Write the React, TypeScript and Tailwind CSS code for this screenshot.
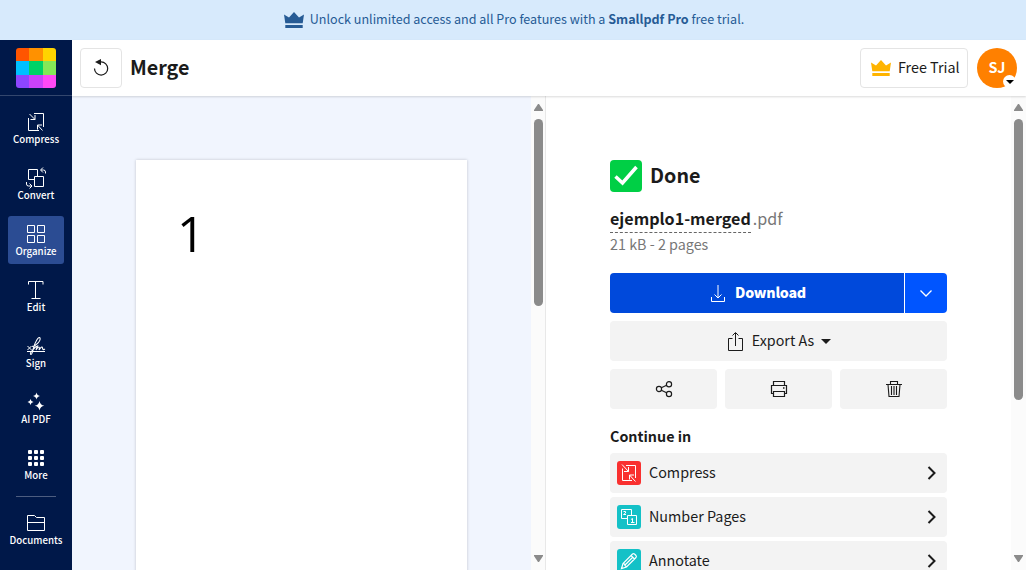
import React from "react";

type IconProps = { className?: string };

function CrownIcon({ className }: IconProps) {
  return (
    <svg className={className} width="20" height="16" viewBox="0 0 20 16" fill="currentColor">
      <path d="M0 2.5 5 5.5 10 0l5 5.500 5-3-1.300 8.800H1.300zM1.300 13h17.400v3H1.300z" />
    </svg>
  );
}

function CompressIcon() {
  return (
    <svg width="24" height="24" viewBox="0 0 24 24" fill="none" stroke="currentColor">
      <path d="M10 3.500h9.500v13.500M4.500 8v12.500h10.500M5.500 4l5.500 5.500M11 5v4.500H6.500M18.500 20.500 13.500 15M13.500 19.500V15H18" />
    </svg>
  );
}

function CompressTileIcon() {
  return (
    <svg width="24" height="24" viewBox="0 0 24 24" fill="none" stroke="currentColor">
      <path d="M9 4.500h9.500v12.500M5.500 7.500v12h9.500M5 3.500l6.500 7M11.500 6v4.500H7M18.500 20.500 12.500 14M12.500 18.500V14H17" />
    </svg>
  );
}

function ConvertIcon() {
  return (
    <svg width="24" height="24" viewBox="0 0 24 24" fill="none" stroke="currentColor">
      <path d="M10 13.500H4.500v-10h9v6.500M10.500 10.500h9v10h-9zM21.500 7.500V6q0-2-2-2H17M19 1.500 16.500 4 19 6.500M2.500 16v2q0 2 2 2H7.500M5.500 17.500 8 20l-2.500 2.500" />
    </svg>
  );
}

function OrganizeIcon() {
  return (
    <svg width="24" height="24" viewBox="0 0 24 24" fill="none" stroke="currentColor">
      <path d="M3.500 3.500h7v7h-7zM13.500 3.500h7v7h-7zM3.500 13.500h7v7h-7zM13.500 13.500h7v7h-7z" />
    </svg>
  );
}

function EditIcon() {
  return (
    <svg width="24" height="24" viewBox="0 0 24 24" fill="none" stroke="currentColor">
      <path d="M4.500 6.500v-3h14.500v3M11.500 3.500v17M7.500 20.500h9" />
    </svg>
  );
}

function SignIcon() {
  return (
    <svg width="24" height="24" viewBox="0 0 24 24" fill="none" stroke="currentColor">
      <path d="M3 17.500h18M3.500 12l4 4M7.500 12l-4 4" />
      <path d="M8 12.500c4 0 9-6 8-8.500s-5 4-6.500 10-2 7-3 6 2-4 5-7l2-1-1.500 4c3-5 4-3 3 0 2-3 3-4 3.500-2s1 2 2.500 1" strokeWidth="1.100" />
    </svg>
  );
}

function SparkIcon() {
  return (
    <svg width="24" height="24" viewBox="0 0 24 24" fill="currentColor">
      <path d="M12.500 2.500q.5 3 3.500 3.500-3 .5-3.500 3.500-.5-3-3.500-3.500 3-.5 3.500-3.500zM6.500 9q.4 2.500 3 3-2.600.5-3 3-.4-2.500-3-3 2.600-.5 3-3zM15.500 11q.7 4 4.800 4.800-4.100.8-4.800 4.800-.7-4-4.800-4.800 4.100-.8 4.800-4.800z" />
    </svg>
  );
}

function MoreIcon() {
  return (
    <svg width="24" height="24" viewBox="0 0 24 24" fill="currentColor">
      {[4, 10, 16].map((y) =>
        [4, 10, 16].map((x) => <rect key={`${x}-${y}`} x={x} y={y} width="4" height="4" rx="1" />)
      )}
    </svg>
  );
}

function FolderIcon() {
  return (
    <svg width="24" height="24" viewBox="0 0 24 24" fill="none" stroke="currentColor">
      <path d="M3.500 19.500v-15h7l2 2h8v13zM3.500 11.500h17" />
    </svg>
  );
}

function ShareIcon() {
  return (
    <svg width="24" height="24" viewBox="0 0 24 24" fill="none" stroke="currentColor" strokeWidth="1.200">
      <circle cx="7" cy="12" r="2.600" />
      <circle cx="17" cy="7.200" r="2.600" />
      <circle cx="17" cy="17" r="2.600" />
      <path d="m9.300 10.800 5.300-2.500M9.300 13.200l5.300 2.600" />
    </svg>
  );
}

function PrintIcon() {
  return (
    <svg width="24" height="24" viewBox="0 0 24 24" fill="none" stroke="currentColor" strokeWidth="1.200">
      <path d="M6.500 8.500v-4h11v4M6.500 16.500h-2v-8h15v8h-2M6.500 14.500h11v5h-11z" />
      <path d="M16 11h1.500" strokeWidth="1.500" />
    </svg>
  );
}

function TrashIcon() {
  return (
    <svg width="24" height="24" viewBox="0 0 24 24" fill="none" stroke="currentColor" strokeWidth="1.100">
      <path d="M4 7.500h16M8.500 7V4.500h7V7M6 7.500l1 12h10l1-12M9.500 9v9M12 9v9M14.500 9v9" />
    </svg>
  );
}

function NumberIcon() {
  return (
    <svg width="24" height="24" viewBox="0 0 24 24" fill="none" stroke="currentColor">
      <path d="M10 13.500H4.500v-9h10V10M10.500 10.500h9v9h-9z" />
      <path d="M6.500 6.500h2v1.500l-2 1.500h2.500M14 14.500l1.500-1v4M14 17.500h3.500" />
    </svg>
  );
}

function PencilIcon() {
  return (
    <svg width="24" height="24" viewBox="0 0 24 24" fill="none" stroke="currentColor" strokeWidth="1.200">
      <path d="m4.500 19.500 1.500-5 9.500-9.500q1-.8 2 0l1.500 1.500q.8 1 0 2L9.500 18zM6 14.500l1.500.5.500 1.500 1.500 1.500M14 6.500l3.500 3.500M8 16l7.500-7.500" />
    </svg>
  );
}

function NavItem({ label, active, children }: { label: string; active?: boolean; children: React.ReactNode }) {
  return (
    <button
      className={`flex h-12 w-14 shrink-0 flex-col items-center pt-[6px] text-white ${active ? "rounded-[3px] bg-[#2b4c93]" : ""}`}
    >
      {children}
      <span className="h-3 text-[9.700px] leading-[10px] font-medium whitespace-nowrap">{label}</span>
    </button>
  );
}

function Scrollbar({ thumb, tone }: { thumb: string; tone: string }) {
  return (
    <div className={`flex w-[15px] shrink-0 flex-col items-center bg-[#fbfbfb] pt-[7px] pb-2 ${tone}`}>
      <svg width="9" height="8" viewBox="0 0 9 8" fill="#8b8b8b">
        <path d="M4 1h1l4 6v1H0V7z" />
      </svg>
      <div className={`mt-2 w-[9px] shrink-0 rounded-full bg-[#8b8b8b] ${thumb}`} />
      <svg className="mt-auto" width="9" height="7" viewBox="0 0 9 7" fill="#8b8b8b">
        <path d="M0 0h9v1L5 7H4L0 1z" />
      </svg>
    </div>
  );
}

function ToolRow({ label, color, children }: { label: string; color: string; children: React.ReactNode }) {
  return (
    <button className="flex h-10 shrink-0 items-center rounded bg-[#f3f3f3] pr-[10px] pl-[7px]">
      <span className={`flex size-6 items-center justify-center rounded-[3px] text-white ${color}`}>{children}</span>
      <span className="ml-2 pb-[2px] text-[14.350px]">{label}</span>
      <svg className="ml-auto" width="10" height="14" viewBox="0 0 10 14" fill="none" stroke="currentColor" strokeWidth="2">
        <path d="m1.500 1 6 6-6 6" />
      </svg>
    </button>
  );
}

export default function App() {
  return (
    <div className="flex h-[570px] w-[1026px] flex-col overflow-hidden bg-white font-['Noto_Sans_CJK_SC',sans-serif] text-[#1b1b1b]">
      <div className="flex h-10 shrink-0 items-center justify-center bg-[#d7eafc] pl-[2px] text-[12.550px] text-[#265b95]">
        <CrownIcon className="mr-[6px]" />
        <span className="pb-[2px] whitespace-pre">
          Unlock unlimited access and all Pro features with a <b>Smallpdf Pro</b> free trial.
        </span>
      </div>
      <div className="flex min-h-0 flex-1">
        <nav className="flex w-[72px] shrink-0 flex-col items-center bg-[#001849]">
          <div className="flex h-14 w-full shrink-0 justify-center border-b border-[#33466d] pt-2">
            <div className="grid size-10 grid-cols-[13px_14px_13px] grid-rows-[13px_14px_13px] overflow-hidden rounded-[3px]">
              <i className="bg-[#ff5500]" />
              <i className="bg-[#ff9100]" />
              <i className="bg-[#ffd400]" />
              <i className="bg-[#00c0ff]" />
              <i className="bg-[#00d267]" />
              <i className="bg-[#84e857]" />
              <i className="bg-[#8d46ff]" />
              <i className="bg-[#cb42fa]" />
              <i className="bg-[#ff49f5]" />
            </div>
          </div>
          <div className="mt-2 flex flex-col items-center gap-2">
            <NavItem label="Compress"><CompressIcon /></NavItem>
            <NavItem label="Convert"><ConvertIcon /></NavItem>
            <NavItem label="Organize" active><OrganizeIcon /></NavItem>
            <NavItem label="Edit"><EditIcon /></NavItem>
            <NavItem label="Sign"><SignIcon /></NavItem>
            <NavItem label="AI PDF"><SparkIcon /></NavItem>
            <NavItem label="More"><MoreIcon /></NavItem>
          </div>
          <div className="mt-2 mb-2 h-px w-10 shrink-0 bg-[#4d5d80]" />
          <NavItem label="Documents"><FolderIcon /></NavItem>
        </nav>
        <div className="flex min-w-0 flex-1 flex-col">
          <header className="relative z-10 flex h-14 shrink-0 items-center bg-white pr-[9px] pl-2 shadow-[0_1px_2px_rgba(0,0,0,0.150)]">
            <button className="flex h-10 w-[42px] items-center justify-center rounded border border-[#e4e4e4]">
              <svg width="16" height="18" viewBox="0 0 16 18" fill="none" stroke="currentColor" strokeWidth="1.200">
                <path d="M1.500 9.500a6.600 6.600 0 1 0 6.600-6.600H5" />
                <path d="M2 3.100 8 0v6.200z" fill="currentColor" stroke="none" />
              </svg>
            </button>
            <h1 className="ml-2 pb-[2px] text-[19.700px] leading-6 font-bold">Merge</h1>
            <button className="ml-auto flex h-10 w-[108px] items-center rounded border border-[#e4e4e4] pl-[10px]">
              <CrownIcon className="text-[#ffb400]" />
              <span className="ml-[7px] pb-[2px] text-[14.350px] whitespace-nowrap">Free Trial</span>
            </button>
            <button className="relative ml-[9px] flex size-10 items-center justify-center rounded-full bg-[#ff8000] pb-[2px] text-[14.400px] leading-5 font-bold text-white">
              SJ
              <span className="absolute right-px bottom-0 flex size-[13px] items-center justify-center rounded-full bg-white">
                <svg width="8" height="4" viewBox="0 0 8 4" fill="#000"><path d="M0 0h8L4 4z" /></svg>
              </span>
            </button>
          </header>
          <div className="flex min-h-0 flex-1">
            <main className="flex w-[459px] shrink-0 justify-center overflow-hidden bg-[#f1f5fe] pt-16">
              <div className="h-[468px] w-[331px] bg-white pt-[45px] pl-[41px] font-['Open_Sans','Noto_Sans',sans-serif] text-[49px] leading-[56px] font-medium text-black shadow-[0_0_3px_rgba(0,0,0,0.200)]">
                1
              </div>
            </main>
            <Scrollbar thumb="h-[187px]" tone="border-r border-[#e8e8e8]" />
            <aside className="flex min-w-0 flex-1 flex-col overflow-hidden pt-16 pr-16 pl-16">
              <div className="flex h-8 shrink-0 items-center">
                <svg width="32" height="32" viewBox="0 0 32 32">
                  <rect width="32" height="32" rx="4" fill="#00cf45" />
                  <path d="m5.500 16.500 7 6.500L26.500 7" fill="none" stroke="#fff" strokeWidth="3.500" />
                </svg>
                <h2 className="ml-2 pb-[2px] text-[19.700px] leading-[30px] font-bold">Done</h2>
              </div>
              <div className="mt-4 flex h-[25px] shrink-0 text-[16.100px] leading-[20px]">
                <b className="border-b border-dashed border-[#666]">ejemplo1-merged</b>
                <span className="ml-[2px] text-[#777]">.pdf</span>
              </div>
              <div className="h-6 shrink-0 text-[14.350px] leading-[22px] text-[#777]">21 kB - 2 pages</div>
              <div className="mt-4 flex h-10 w-[337px] shrink-0 gap-px text-white">
                <button className="flex flex-1 items-center justify-center rounded-l bg-[#0049db] pl-[3px]">
                  <svg className="mr-[10px]" width="14" height="17" viewBox="0 0 14 17" fill="none" stroke="currentColor">
                    <path d="M.5 12v4.500h13V12M7 0v13M3.500 9.500 7 13l3.500-3.500" />
                  </svg>
                  <span className="pb-px text-[14.200px] font-black tracking-[-0.250px]">Download</span>
                </button>
                <button className="flex w-[42px] items-center justify-center rounded-r bg-[#0055ff]">
                  <svg width="12" height="7" viewBox="0 0 12 7" fill="none" stroke="currentColor" strokeWidth="1.300"><path d="m.5.5 5.500 5.500L11.500.5" /></svg>
                </button>
              </div>
              <button className="mt-2 flex h-10 w-[337px] shrink-0 items-center justify-center rounded bg-[#f3f3f3] pl-[2px]">
                <svg className="mr-[9px]" width="15" height="19" viewBox="0 0 15 19" fill="none" stroke="currentColor">
                  <path d="M4.500 6.500h-4v12h14v-12h-4M7.500 1v13M4.500 3.500l3-3 3 3" />
                </svg>
                <span className="pb-[2px] text-[14.300px]">Export As</span>
                <svg className="ml-[7px]" width="10" height="5" viewBox="0 0 10 5" fill="currentColor"><path d="M0 0h10L5 5z" /></svg>
              </button>
              <div className="mt-2 grid h-10 w-[337px] shrink-0 grid-cols-3 gap-2">
                <button className="flex items-center justify-center rounded bg-[#f3f3f3]"><ShareIcon /></button>
                <button className="flex items-center justify-center rounded bg-[#f3f3f3]"><PrintIcon /></button>
                <button className="flex items-center justify-center rounded bg-[#f3f3f3]"><TrashIcon /></button>
              </div>
              <h3 className="mt-4 h-6 shrink-0 text-[14.300px] leading-[22px] font-bold">Continue in</h3>
              <div className="mt-1 flex w-[337px] flex-col gap-1">
                <ToolRow label="Compress" color="bg-[#f9302f]"><CompressTileIcon /></ToolRow>
                <ToolRow label="Number Pages" color="bg-[#14c1c7]"><NumberIcon /></ToolRow>
                <ToolRow label="Annotate" color="bg-[#14c1c7]"><PencilIcon /></ToolRow>
              </div>
            </aside>
            <Scrollbar thumb="h-[281px]" tone="" />
          </div>
        </div>
      </div>
    </div>
  );
}
